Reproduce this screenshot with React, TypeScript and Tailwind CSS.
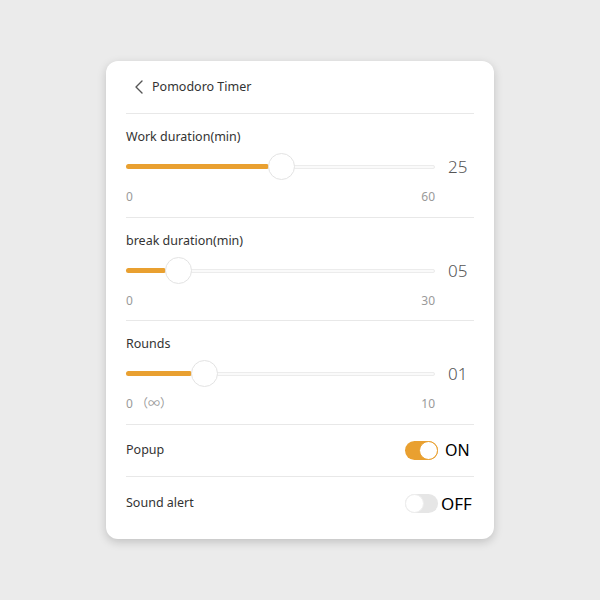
import { ChevronLeft } from "lucide-react"

type SliderRowProps = {
  label: string
  value: string
  thumbAt: number
  min: string
  max: string
}

// thumbAt: thumb center, in px from the track's left edge
function SliderRow({ label, value, thumbAt, min, max }: SliderRowProps) {
  return (
    <div className="border-b border-[#e8e8e8] pt-[14px] pb-[11.5px]">
      <div className="h-[18px] text-[12.5px] leading-[18px] text-[#333]">{label}</div>
      <div className="mt-[8px] flex h-[26px] items-center">
        <div className="relative h-[26px] w-[309px]">
          <div className="absolute left-0 right-0 top-[11px] h-[4px] rounded-full border border-[#ececec] bg-[#fafafa]" />
          <div
            className="absolute left-0 top-[10px] h-[5px] rounded-full bg-[#e9a030]"
            style={{ width: thumbAt - 12 }}
          />
          <div
            className="absolute top-[-1px] h-[27px] w-[27px] rounded-full border border-[#e3e3e3] bg-white"
            style={{ left: thumbAt - 13.5 }}
          />
        </div>
        <div className="pl-[13px] text-[17px] font-light text-[#555]">{value}</div>
      </div>
      <div className="mt-[9px] flex h-[16px] w-[309px] items-center justify-between text-[12px] text-[#9a9a9a]">
        <span>{min}</span>
        <span>{max}</span>
      </div>
    </div>
  )
}

type ToggleRowProps = {
  label: string
  on: boolean
  last?: boolean
}

function ToggleRow({ label, on, last }: ToggleRowProps) {
  return (
    <div
      className={
        "flex h-[52.5px] items-center justify-between " +
        (last ? "" : "border-b border-[#e8e8e8]")
      }
    >
      <span className="text-[12.5px] text-[#333]">{label}</span>
      <div className="flex items-center">
        {on ? (
          <div className="flex h-[19px] w-[33px] items-center justify-end rounded-full bg-[#e9a030]">
            <div className="h-[19px] w-[19px] rounded-full border border-[#e9a030] bg-white" />
          </div>
        ) : (
          <div className="flex h-[19px] w-[33px] items-center justify-start rounded-full bg-[#e6e6e6]">
            <div className="h-[19px] w-[19px] rounded-full border border-[#eeeeee] bg-white" />
          </div>
        )}
        <span className={"text-black " + (on ? "ml-[7px] w-[29px] text-[16px]" : "ml-[3px] w-[33px] text-[17px]")}>
          {on ? "ON" : "OFF"}
        </span>
      </div>
    </div>
  )
}

export default function App() {
  return (
    <div
      className="flex h-[600px] w-[600px] justify-center bg-[#ebebeb] pt-[61px]"
      style={{ fontFamily: '"Noto Sans", "Noto Sans CJK SC", sans-serif' }}
    >
      <div className="h-[478px] w-[388px] rounded-[12px] bg-white px-[20px] pb-[10px] shadow-[0_3px_10px_rgba(0,0,0,0.18)]">
        <div className="flex h-[53px] items-center border-b border-[#e8e8e8] pl-[1px]">
          <ChevronLeft className="h-[24px] w-[24px] text-[#555]" strokeWidth={1.4} />
          <span className="ml-[1px] text-[12.5px] text-[#333]">Pomodoro Timer</span>
        </div>
        <SliderRow label="Work duration(min)" value="25" thumbAt={155} min="0" max="60" />
        <SliderRow label="break duration(min)" value="05" thumbAt={52} min="0" max="30" />
        <SliderRow label="Rounds" value="01" thumbAt={78} min="0 （∞）" max="10" />
        <ToggleRow label="Popup" on />
        <ToggleRow label="Sound alert" on={false} last />
      </div>
    </div>
  )
}
